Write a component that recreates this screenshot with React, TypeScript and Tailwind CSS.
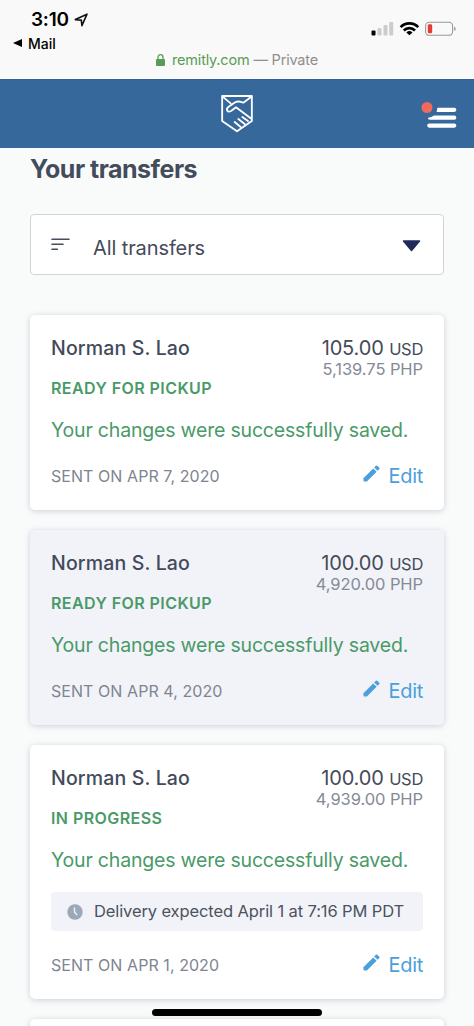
import { clsx } from "clsx"

type Transfer = {
    name: string
    usd: string
    php: string
    status: string
    sentOn: string
    delivery?: string
    shaded?: boolean
}

const transfers: Transfer[] = [
    { name: "Norman S. Lao", usd: "105.00", php: "5,139.75", status: "Ready for pickup", sentOn: "Apr 7, 2020" },
    { name: "Norman S. Lao", usd: "100.00", php: "4,920.00", status: "Ready for pickup", sentOn: "Apr 4, 2020", shaded: true },
    {
        name: "Norman S. Lao",
        usd: "100.00",
        php: "4,939.00",
        status: "In progress",
        sentOn: "Apr 1, 2020",
        delivery: "Delivery expected April 1 at 7:16 PM PDT",
    },
]

function LocationIcon() {
    return (
        <svg width="14" height="14" viewBox="0 0 14 14" fill="none" stroke="#111" strokeWidth="1.6" strokeLinejoin="round">
            <path d="M1.3 6.6 13 1.2 7.9 12.6 7.3 7.1Z" />
        </svg>
    )
}

function StatusIcons() {
    return (
        <svg width="86" height="16" viewBox="0 0 86 16">
            {/* Signal */}
            <rect x="0.5" y="9.5" width="4" height="5" rx="1" fill="#000" />
            <rect x="6.5" y="7" width="4" height="7.5" rx="1" fill="#ccc" />
            <rect x="12.5" y="4" width="4" height="10.5" rx="1" fill="#ccc" />
            <rect x="18.2" y="1" width="4" height="13.5" rx="1" fill="#ccc" />
            {/* Wifi */}
            <g fill="none" stroke="#000" strokeWidth="2.6">
                <path d="M29.6 6.1A12.2 12.2 0 0 1 47.2 6.1" />
                <path d="M32.8 9.5A7.8 7.8 0 0 1 44 9.5" />
            </g>
            <path d="M38.4 14.2 35.3 11.4A4.6 4.6 0 0 1 41.5 11.4Z" fill="#000" />
            {/* Battery */}
            <rect x="54.6" y="1.3" width="27" height="13" rx="3.6" fill="none" stroke="#999" strokeWidth="1.1" />
            <rect x="56.8" y="3.3" width="4.4" height="9" rx="1.4" fill="#e33e33" />
            <path d="M83.2 5.8C85.2 6.4 85.2 9.4 83.2 10Z" fill="#999" />
        </svg>
    )
}

function StatusBar() {
    return (
        <div className="flex h-[79px] flex-col bg-[#f9f9f9]">
            <div className="flex h-[51px] justify-between pl-[31px] pr-[17px]">
                <div className="pt-2">
                    <div className="flex h-6 items-center gap-[5px] text-[19px] font-semibold tracking-[-0.25px] text-black">
                        3:10
                        <LocationIcon />
                    </div>
                    <div className="-ml-[18px] flex h-[22px] items-center gap-[6px] text-[14px] font-medium text-black">
                        <svg width="9" height="8" viewBox="0 0 9 8"><path d="M0 4 9 0V8Z" /></svg>
                        Mail
                    </div>
                </div>
                <div className="pt-[21px]">
                    <StatusIcons />
                </div>
            </div>
            <div className="flex h-[18px] items-center justify-center text-[14.5px] tracking-[-0.2px] text-[#8e8e8e]">
                <svg className="mr-[7px]" width="9" height="12" viewBox="0 0 9 12">
                    <rect y="5" width="9" height="7" rx="1" fill="#5a9c55" />
                    <path d="M2 5.5V3.2a2.5 2.5 0 0 1 5 0V5.5" fill="none" stroke="#5a9c55" strokeWidth="1.3" />
                </svg>
                <span className="mr-1 text-[#5a9c55]">remitly.com</span>
                — Private
            </div>
        </div>
    )
}

function Header() {
    return (
        <header className="grid h-[69px] grid-cols-3 items-center border-t border-[#335f91] bg-[#37689c]">
            <div />
            <svg className="mx-auto" width="34" height="40" viewBox="0 0 102 120" fill="none" stroke="#fff" strokeWidth="5.5" strokeLinecap="round" strokeLinejoin="round">
                <path d="M6.5 6H95.5V81L51 112 6.5 81Z" />
                <path d="M8 8 32 28" />
                <path d="M94 8 70 26 59 23C51 21 46 24 42 27L25 39C16 46 23 57 33 51L48 40 94 74" />
                <path d="M67 69 84 81M55 75 74 90M44 84 62 99" />
            </svg>
            <div className="flex justify-end pr-[17px]">
                <svg width="36" height="28" viewBox="0 0 36 28">
                    <g stroke="#fff" strokeWidth="4.3" strokeLinecap="round">
                        <path d="M14 9.8H33.2M9 17.7H33.2M8.3 25.6H33.2" />
                    </g>
                    <circle cx="6" cy="7.5" r="10.5" fill="#37689c" />
                    <circle cx="6" cy="7.5" r="5.5" fill="#ef6a5c" />
                </svg>
            </div>
        </header>
    )
}

function FilterSelect() {
    return (
        <button className="flex h-[61px] w-full items-center rounded-[4px] border-[1.5px] border-[#d0d3d9] bg-white pl-[20px] pr-[22px]">
            <svg width="19" height="13" viewBox="0 0 19 13" fill="none" stroke="#454d5a" strokeWidth="1.6" strokeLinecap="round">
                <path d="M1 1.3H18M1 6.3H12M1 11.3H6.3" />
            </svg>
            <span className="ml-[23px] mt-[6px] text-[20px] tracking-[-0.1px] text-[#444b59]">All transfers</span>
            <svg className="ml-auto mt-[3px]" width="19" height="12" viewBox="0 0 19 12">
                <path d="M1.5 1H17.5L9.5 10.5Z" fill="#202a5a" stroke="#202a5a" strokeWidth="1.5" strokeLinejoin="round" />
            </svg>
        </button>
    )
}

function EditButton() {
    return (
        <button className="flex h-6 items-center gap-[9px] text-[20px] tracking-[-0.3px] text-[#4b9fdc]">
            <svg className="-mt-[5px]" width="17" height="17" viewBox="0 0 18 18" fill="currentColor">
                <path d="M0.5 13.9 10.8 3.6 14.4 7.2 4.1 17.5H1.5Q0.5 17.5 0.5 16.5Z" />
                <path d="M11.8 2.6 13.7 0.7Q14.4 0.2 15.1 0.7L17.3 2.9Q17.8 3.6 17.3 4.3L15.4 6.2Z" />
            </svg>
            Edit
        </button>
    )
}

function TransferCard({ transfer }: { transfer: Transfer }) {
    return (
        <article
            className={clsx(
                "rounded-[5px] px-[21px] pb-[22px] pt-[21px] shadow-[0_1px_6px_rgba(60,70,110,0.24)]",
                transfer.shaded ? "bg-[#f2f3f8]" : "bg-white",
            )}
        >
            <div className="flex items-start justify-between">
                <div>
                    <h2 className="text-[19.5px] font-medium leading-6 tracking-[0.15px] text-[#424a5b]">{transfer.name}</h2>
                    <p className="mt-4 text-[16px] font-semibold uppercase leading-6 tracking-[0.43px] text-[#4a9a69]">{transfer.status}</p>
                </div>
                <div className="text-right">
                    <p className="text-[20px] leading-6 tracking-[-0.15px] text-[#444b59]">
                        {transfer.usd} <span className="text-[16.5px] tracking-[-0.3px]">USD</span>
                    </p>
                    <p className="text-[16.5px] leading-[17px] tracking-[-0.08px] text-[#858b96]">{transfer.php} PHP</p>
                </div>
            </div>
            <p className="mt-[18px] whitespace-nowrap text-[19.5px] leading-6 tracking-[-0.19px] text-[#4a9a69]">
                Your changes were successfully saved.
            </p>
            {transfer.delivery && (
                <div className="mt-5 flex h-[39px] items-center rounded-[4px] bg-[#f2f3f8] pl-4">
                    <svg width="16" height="16" viewBox="0 0 16 16">
                        <circle cx="8" cy="8" r="7.7" fill="#9ca7b9" />
                        <path d="M7.5 3.5V8.2L10.3 11" fill="none" stroke="#f2f3f8" strokeWidth="1.4" />
                    </svg>
                    <span className="ml-[11px] whitespace-nowrap text-[16.5px] tracking-[-0.11px] text-[#4b5260]">{transfer.delivery}</span>
                </div>
            )}
            <div className="mt-[22px] flex items-center justify-between">
                <p className="text-[16px] uppercase leading-6 tracking-[0.06px] text-[#7e8591]">Sent on {transfer.sentOn}</p>
                <EditButton />
            </div>
        </article>
    )
}

export default function App() {
    return (
        <div className="relative h-[1026px] w-[474px] overflow-hidden bg-[#f9fbfb] font-['Inter',sans-serif]">
            <StatusBar />
            <Header />
            <main className="px-[30px]">
                <h1 className="pt-[5px] text-[25px] font-bold leading-8 tracking-[-0.5px] text-[#444c5b]">Your transfers</h1>
                <div className="mt-[29px]">
                    <FilterSelect />
                </div>
                <div className="mt-10 flex flex-col gap-5">
                    {transfers.map((transfer) => (
                        <TransferCard key={transfer.sentOn} transfer={transfer} />
                    ))}
                    <div className="h-10 rounded-[5px] bg-white shadow-[0_1px_6px_rgba(60,70,110,0.24)]" />
                </div>
            </main>
            {/* Home indicator */}
            <div className="absolute bottom-[10px] left-[152px] h-[7px] w-[170px] rounded-full bg-black" />
        </div>
    )
}
